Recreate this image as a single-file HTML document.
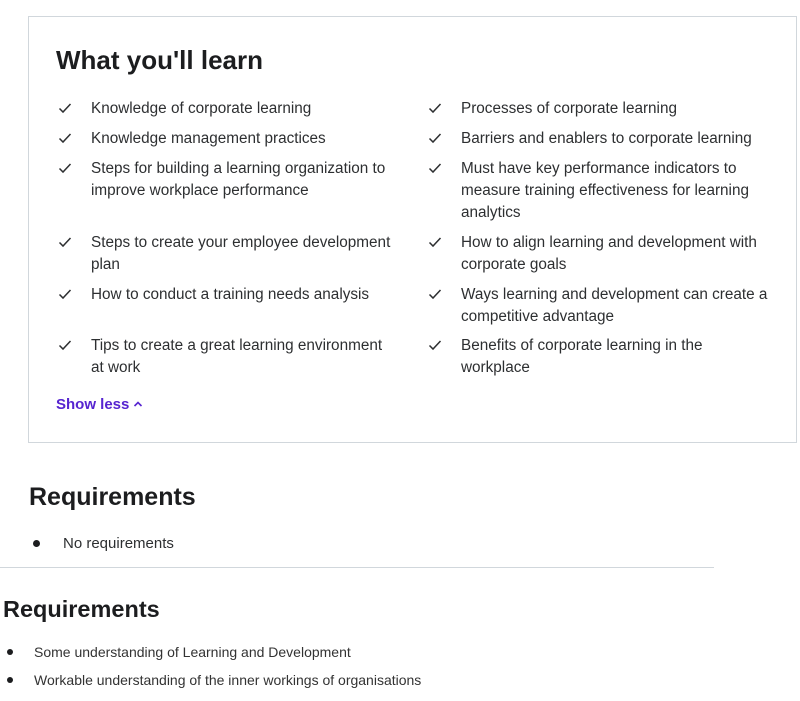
<!DOCTYPE html>
<html><head><meta charset="utf-8"><style>
body{margin:0;width:800px;height:701px;background:#fff;font-family:"Liberation Sans",sans-serif;color:#2d2f31;position:relative;overflow:hidden}
.box{position:absolute;left:28px;top:16px;width:769px;height:427px;border:1px solid #d1d7dc;box-sizing:border-box}
h2{position:absolute;margin:0;font-weight:bold;color:#1c1d1f;white-space:nowrap}
.it{position:absolute;font-size:15.3px;line-height:22px;width:300px;color:#2d2f31}
.ck{position:absolute;width:14px;height:14px}
.bul{position:absolute;width:7px;height:7px;border-radius:50%;background:#1c1d1f}
.t{position:absolute;white-space:nowrap}
</style></head><body>
<div class="box"></div>
<h2 style="left:56px;top:45px;font-size:26px">What you'll learn</h2>

<svg width="0" height="0" style="position:absolute"><defs><symbol id="c" viewBox="0 0 14 14"><path d="M1.5 7.5 L5 11 L12.5 3" fill="none" stroke="#2d2f31" stroke-width="1.5"/></symbol></defs></svg>

<svg class="ck" style="left:58px;top:101px"><use href="#c"/></svg><div class="it" style="left:91px;top:98px">Knowledge of corporate learning</div>
<svg class="ck" style="left:58px;top:131px"><use href="#c"/></svg><div class="it" style="left:91px;top:128px">Knowledge management practices</div>
<svg class="ck" style="left:58px;top:161px"><use href="#c"/></svg><div class="it" style="left:91px;top:158px">Steps for building a learning organization to improve workplace performance</div>
<svg class="ck" style="left:58px;top:235px"><use href="#c"/></svg><div class="it" style="left:91px;top:232px">Steps to create your employee development plan</div>
<svg class="ck" style="left:58px;top:287px"><use href="#c"/></svg><div class="it" style="left:91px;top:284px">How to conduct a training needs analysis</div>
<svg class="ck" style="left:58px;top:338px"><use href="#c"/></svg><div class="it" style="left:91px;top:335px;width:295px">Tips to create a great learning environment at work</div>

<svg class="ck" style="left:428px;top:101px"><use href="#c"/></svg><div class="it" style="left:461px;top:98px">Processes of corporate learning</div>
<svg class="ck" style="left:428px;top:131px"><use href="#c"/></svg><div class="it" style="left:461px;top:128px;width:320px">Barriers and enablers to corporate learning</div>
<svg class="ck" style="left:428px;top:161px"><use href="#c"/></svg><div class="it" style="left:461px;top:158px;width:300px">Must have key performance indicators to measure training effectiveness for learning analytics</div>
<svg class="ck" style="left:428px;top:235px"><use href="#c"/></svg><div class="it" style="left:461px;top:232px;width:320px">How to align learning and development with corporate goals</div>
<svg class="ck" style="left:428px;top:287px"><use href="#c"/></svg><div class="it" style="left:461px;top:284px;width:320px">Ways learning and development can create a competitive advantage</div>
<svg class="ck" style="left:428px;top:338px"><use href="#c"/></svg><div class="it" style="left:461px;top:335px;width:290px">Benefits of corporate learning in the workplace</div>

<div class="t" style="left:56px;top:396px;font-size:15px;font-weight:bold;color:#5624d0">Show less</div>
<svg style="position:absolute;left:133px;top:400px" width="10" height="8"><path d="M1.5 6 L5 2.5 L8.5 6" fill="none" stroke="#5624d0" stroke-width="1.6"/></svg>

<h2 style="left:29px;top:483px;font-size:25px">Requirements</h2>
<div class="bul" style="left:33px;top:540px"></div>
<div class="t" style="left:63px;top:535px;font-size:15px">No requirements</div>
<div style="position:absolute;left:0;top:567px;width:714px;height:1px;background:#d1d7dc"></div>

<h2 style="left:3px;top:596px;font-size:23.5px">Requirements</h2>
<div class="bul" style="left:7px;top:649px;width:6px;height:6px"></div>
<div class="t" style="left:34px;top:644px;font-size:14px;color:#333">Some understanding of Learning and Development</div>
<div class="bul" style="left:7px;top:677px;width:6px;height:6px"></div>
<div class="t" style="left:34px;top:672px;font-size:14px;color:#333">Workable understanding of the inner workings of organisations</div>
</body></html>
